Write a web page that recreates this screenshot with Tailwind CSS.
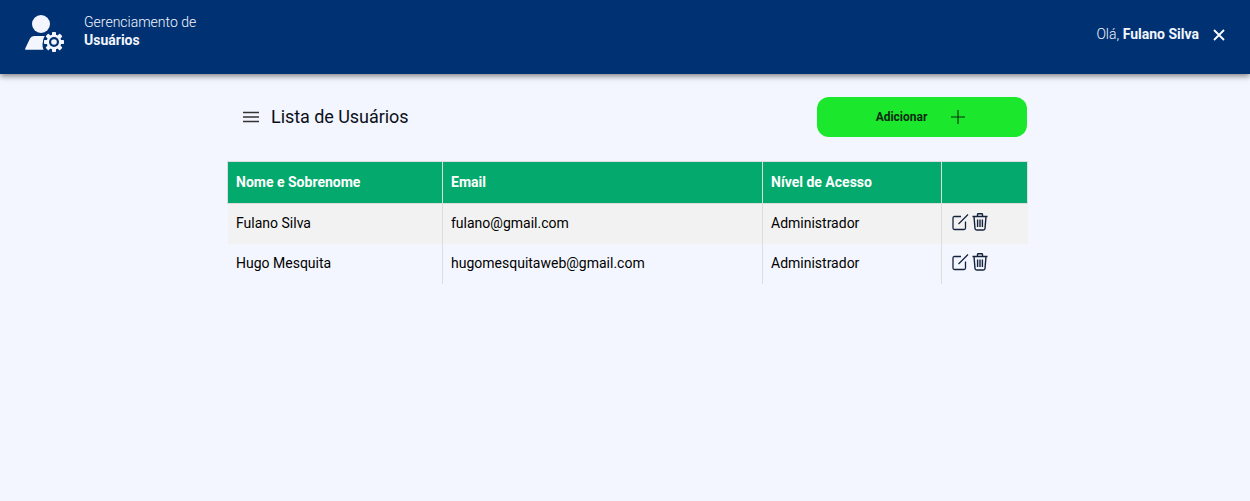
<!DOCTYPE html>
<html lang="pt-BR">
<head>
<meta charset="utf-8">
<title>Usuários</title>
<script src="https://cdn.jsdelivr.net/npm/@tailwindcss/browser@4"></script>
</head>
<body class="h-[501px] overflow-hidden bg-[#f3f6fe] font-['Roboto',sans-serif] text-black">
<header class="relative flex h-[74px] items-start justify-between bg-[#003273] pl-6 pr-[25px] pt-[13px] shadow-[0_2px_6px_rgba(0,0,0,0.5)]">
  <div class="flex items-start gap-5">
    <svg class="mt-px h-[40px] w-[40px]" viewBox="0 0 40 40" fill="#f3f6fe">
      <circle cx="17" cy="10" r="9"/>
      <path d="M6 24.5 Q7.2 22 10 22 H24 Q19 25 18.5 30 Q18.3 33 19.5 35.8 L1.8 35.8 Q0.8 35.8 1.1 34.8 Z"/>
      <g transform="translate(30 28)">
        <circle r="11" fill="#003273"/>
        <g fill="#f3f6fe">
          <rect x="-2" y="-10" width="4" height="20" rx="0.8"/>
          <rect x="-2" y="-10" width="4" height="20" rx="0.8" transform="rotate(45)"/>
          <rect x="-2" y="-10" width="4" height="20" rx="0.8" transform="rotate(90)"/>
          <rect x="-2" y="-10" width="4" height="20" rx="0.8" transform="rotate(135)"/>
        </g>
        <circle r="7.4" fill="#f3f6fe"/>
        <circle r="5" fill="#003273"/>
        <circle r="2.8" fill="#f3f6fe"/>
      </g>
    </svg>
    <div class="text-sm leading-[18px] text-[#f3f6fe]">
      <p class="font-light">Gerenciamento de</p>
      <p class="font-bold">Usuários</p>
    </div>
  </div>
  <div class="mt-[11px] flex h-[20px] items-center gap-[14px] text-sm text-[#f3f6fe]">
    <p><span class="font-light">Olá,</span> <span class="font-bold">Fulano Silva</span></p>
    <svg class="h-[12px] w-[12px] translate-y-px" viewBox="0 0 12 12" fill="none" stroke="#ffffff" stroke-width="1.8"><path d="M1 1 L11 11 M11 1 L1 11"/></svg>
  </div>
</header>
<main class="ml-[227px] w-[800px]">
  <div class="mt-[23px] flex h-[40px] items-center justify-between">
    <div class="flex items-center gap-[12px] pl-4">
      <svg class="h-[14px] w-[16px]" viewBox="0 0 16 14" fill="none" stroke="#333333" stroke-width="1.5"><path d="M0 2.5 H16 M0 7 H16 M0 11.5 H16"/></svg>
      <h1 class="text-lg leading-[24px] tracking-[-0.05px] text-[#0b0f19]">Lista de Usuários</h1>
    </div>
    <button class="flex h-[40px] w-[210px] items-center justify-center gap-[24px] rounded-[12px] bg-[#1be82c] pr-[3px] text-xs font-bold text-[#0a2a10]">
      Adicionar
      <svg class="h-[14px] w-[14px]" viewBox="0 0 14 14" fill="none" stroke="#0a2a10" stroke-width="1.1"><path d="M7 0 V14 M0 7 H14"/></svg>
    </button>
  </div>
  <table class="mt-[24px] w-[800px] table-fixed border-collapse text-sm">
    <colgroup><col class="w-[215px]"><col class="w-[320px]"><col class="w-[179px]"><col class="w-[86px]"></colgroup>
    <thead>
      <tr class="h-[42px] bg-[#04aa6d] text-left font-bold text-white">
        <th class="border border-[#dddddd] px-2 pb-[2px]">Nome e Sobrenome</th>
        <th class="border border-[#dddddd] px-2 pb-[2px]">Email</th>
        <th class="border border-[#dddddd] px-2 pb-[2px]">Nível de Acesso</th>
        <th class="border border-[#dddddd] px-2 pb-[2px]"></th>
      </tr>
    </thead>
    <tbody>
      <tr class="h-[40px] bg-[#f2f2f2]">
        <td class="border-r border-[#dddddd] pl-[8.5px] pr-2 pb-[2px]">Fulano Silva</td>
        <td class="border-r border-[#dddddd] px-2 pb-[2px]">fulano@gmail.com</td>
        <td class="border-r border-[#dddddd] px-2 pb-[2px]">Administrador</td>
        <td class="pl-[10px]">
          <div class="flex items-center gap-[3px] pb-[3px]">
            <svg class="h-[18px] w-[17px]" viewBox="0 0 17 18" fill="none" stroke="#14233c" stroke-width="1.3"><path d="M9 3.5 H2.5 Q1 3.5 1 5 V15 Q1 16.5 2.5 16.5 H12 Q13.5 16.5 13.5 15 V8.5"/><path d="M6.5 11 L16 1.5"/></svg>
            <svg class="h-[18px] w-[16px]" viewBox="0 0 16 18" fill="none" stroke="#14233c" stroke-width="1.4"><path d="M0.5 3.5 H15.5 M5.5 3.5 V1.5 Q5.5 0.8 6.2 0.8 H9.8 Q10.5 0.8 10.5 1.5 V3.5"/><path d="M2 3.5 L3 15.5 Q3.1 17 4.6 17 H11.4 Q12.9 17 13 15.5 L14 3.5"/><path d="M5.6 6.5 V14 M8 6.5 V14 M10.4 6.5 V14"/></svg>
          </div>
        </td>
      </tr>
      <tr class="h-[40px]">
        <td class="border-r border-[#dddddd] pl-[8.5px] pr-2 pb-[2px]">Hugo Mesquita</td>
        <td class="border-r border-[#dddddd] px-2 pb-[2px]">hugomesquitaweb@gmail.com</td>
        <td class="border-r border-[#dddddd] px-2 pb-[2px]">Administrador</td>
        <td class="pl-[10px]">
          <div class="flex items-center gap-[3px] pb-[3px]">
            <svg class="h-[18px] w-[17px]" viewBox="0 0 17 18" fill="none" stroke="#14233c" stroke-width="1.3"><path d="M9 3.5 H2.5 Q1 3.5 1 5 V15 Q1 16.5 2.5 16.5 H12 Q13.5 16.5 13.5 15 V8.5"/><path d="M6.5 11 L16 1.5"/></svg>
            <svg class="h-[18px] w-[16px]" viewBox="0 0 16 18" fill="none" stroke="#14233c" stroke-width="1.4"><path d="M0.5 3.5 H15.5 M5.5 3.5 V1.5 Q5.5 0.8 6.2 0.8 H9.8 Q10.5 0.8 10.5 1.5 V3.5"/><path d="M2 3.5 L3 15.5 Q3.1 17 4.6 17 H11.4 Q12.9 17 13 15.5 L14 3.5"/><path d="M5.6 6.5 V14 M8 6.5 V14 M10.4 6.5 V14"/></svg>
          </div>
        </td>
      </tr>
    </tbody>
  </table>
</main>
</body>
</html>
